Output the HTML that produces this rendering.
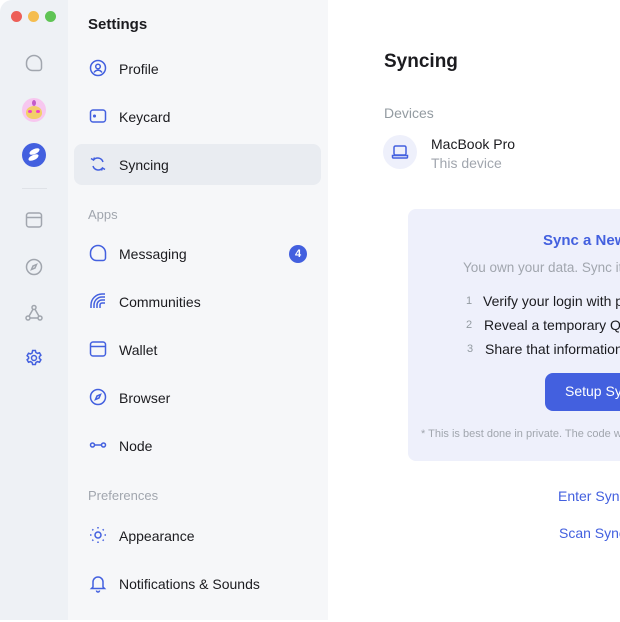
<!DOCTYPE html>
<html><head><meta charset="utf-8"><style>
*{margin:0;padding:0;box-sizing:border-box}
body{width:620px;height:620px;overflow:hidden;background:#fff;font-family:"Liberation Sans",sans-serif;position:relative;color:#1b1b1f}
.w{position:absolute;left:0;top:2px;width:620px;height:620px}
.rail{position:absolute;left:0;top:0;width:68px;height:620px;background:#eef1f5;border-top-left-radius:12px}
.col{position:absolute;left:68px;top:0;width:260px;height:620px;background:#f6f7f9}
.a{position:absolute;white-space:nowrap}
.it{font-size:14px;left:119px;line-height:16px}
.ic{position:absolute;left:88px;width:20px;height:20px}
.sec{font-size:13px;color:#a1a6ae;left:88px}
.ri{position:absolute;left:24px;width:20px;height:20px}
</style></head><body>
<div class="rail"></div>
<div class="col"></div>
<div class="w">
<div class="a" style="left:11px;top:9px;width:11px;height:11px;border-radius:50%;background:#ed5f57"></div>
<div class="a" style="left:28px;top:9px;width:11px;height:11px;border-radius:50%;background:#f5bd4f"></div>
<div class="a" style="left:45px;top:9px;width:11px;height:11px;border-radius:50%;background:#5fc454"></div>

<svg class="ri" style="top:51px" viewBox="0 0 20 20" fill="none" stroke="#a1a6ae" stroke-width="1.5"><path d="M10 2.5a7.5 7.5 0 0 0-7.5 7.5v1.5a6 6 0 0 0 6 6H15a2.5 2.5 0 0 0 2.5-2.5V10A7.5 7.5 0 0 0 10 2.5z"/></svg>
<div class="a" style="left:22px;top:96px;width:24px;height:24px;border-radius:50%;background:#f7c7ef;overflow:hidden">
 <div class="a" style="left:4px;top:8px;width:16px;height:13px;border-radius:50% 50% 45% 45%;background:#f2cf6a"></div>
 <div class="a" style="left:6px;top:12px;width:4px;height:3px;border-radius:50%;background:#ef3ec8"></div>
 <div class="a" style="left:14px;top:12px;width:4px;height:3px;border-radius:50%;background:#ef3ec8"></div>
 <div class="a" style="left:10px;top:2px;width:4px;height:6px;border-radius:50%;background:#c35cc9"></div>
</div>
<div class="a" style="left:22px;top:141px;width:24px;height:24px;border-radius:50%;background:#4360df">
 <div class="a" style="left:7px;top:6px;width:11px;height:5px;border-radius:50%;background:#fff;transform:rotate(-25deg)"></div>
 <div class="a" style="left:6px;top:12px;width:11px;height:5px;border-radius:50%;background:#fff;transform:rotate(-25deg)"></div>
</div>
<div class="a" style="left:22px;top:186px;width:25px;height:1px;background:#dfe2e7"></div>
<svg class="ri" style="top:208px" viewBox="0 0 20 20" fill="none" stroke="#a1a6ae" stroke-width="1.5"><rect x="2.5" y="3" width="15" height="14" rx="2.5"/><path d="M2.5 7.5h15"/></svg>
<svg class="ri" style="top:255px" viewBox="0 0 20 20" fill="none" stroke="#a1a6ae" stroke-width="1.5"><circle cx="10" cy="10" r="7.5"/><path d="M12.5 7.5l-1.5 3.5-3.5 1.5 1.5-3.5z"/></svg>
<svg class="ri" style="top:301px" viewBox="0 0 20 20" fill="none" stroke="#a1a6ae" stroke-width="1.5"><circle cx="10" cy="4.5" r="2"/><circle cx="4" cy="15" r="2"/><circle cx="16" cy="15" r="2"/><path d="M9 6.3L5 13.2M11 6.3l4 6.9M6 15h8"/></svg>
<svg class="ri" style="top:346px" viewBox="0 0 20 20" fill="none" stroke="#4360df" stroke-width="1.5"><circle cx="10" cy="10" r="2.5"/><path d="M8.6 2.5h2.8l.5 2 1.6.9 2-.6 1.4 2.4-1.5 1.4v1.8l1.5 1.4-1.4 2.4-2-.6-1.6.9-.5 2H8.6l-.5-2-1.6-.9-2 .6-1.4-2.4 1.5-1.4V9.1L3.1 7.7l1.4-2.4 2 .6 1.6-.9z"/></svg>

<div class="a" style="left:88px;top:14px;font-size:15px;font-weight:bold">Settings</div>

<div class="a" style="left:74px;top:142px;width:247px;height:41px;border-radius:8px;background:#e9ecf1"></div>

<svg class="ic" style="top:56px" viewBox="0 0 20 20" fill="none" stroke="#4360df" stroke-width="1.5"><circle cx="10" cy="10" r="7.5"/><circle cx="10" cy="8.5" r="2.3"/><path d="M6 14.5c1-1.6 2.3-2.3 4-2.3s3 .7 4 2.3"/></svg>
<div class="a it" style="top:59px">Profile</div>
<svg class="ic" style="top:104px" viewBox="0 0 20 20" fill="none" stroke="#4360df" stroke-width="1.5"><rect x="2.5" y="4" width="15" height="12" rx="2.5"/><circle cx="6.5" cy="10" r=".8" fill="#4360df"/></svg>
<div class="a it" style="top:107px">Keycard</div>
<svg class="ic" style="top:152px" viewBox="0 0 20 20" fill="none" stroke="#4360df" stroke-width="1.5"><path d="M15 8a5.5 5.5 0 0 0-9.5-2M5 12a5.5 5.5 0 0 0 9.5 2"/><path d="M3 4.5l2.5 1.5 1-2.5M17 15.5l-2.5-1.5-1 2.5"/></svg>
<div class="a it" style="top:155px">Syncing</div>
<div class="a sec" style="top:205px">Apps</div>
<svg class="ic" style="top:241px" viewBox="0 0 20 20" fill="none" stroke="#4360df" stroke-width="1.5"><path d="M10 2.5a7.5 7.5 0 0 0-7.5 7.5v1.5a6 6 0 0 0 6 6H15a2.5 2.5 0 0 0 2.5-2.5V10A7.5 7.5 0 0 0 10 2.5z"/></svg>
<div class="a it" style="top:244px">Messaging</div>
<div class="a" style="left:289px;top:243px;width:18px;height:18px;border-radius:50%;background:#4360df;color:#fff;font-size:11px;font-weight:bold;text-align:center;line-height:18px">4</div>
<svg class="ic" style="top:289px" viewBox="0 0 20 20" fill="none" stroke="#4360df" stroke-width="1.5"><path d="M3 17v-3a11 11 0 0 1 11-11h3M6 17v-3a8 8 0 0 1 8-8h3M9 17v-3a5 5 0 0 1 5-5h3M12 17v-3a2 2 0 0 1 2-2h3"/></svg>
<div class="a it" style="top:292px">Communities</div>
<svg class="ic" style="top:337px" viewBox="0 0 20 20" fill="none" stroke="#4360df" stroke-width="1.5"><rect x="2.5" y="3" width="15" height="14" rx="2.5"/><path d="M2.5 7.5h15"/></svg>
<div class="a it" style="top:340px">Wallet</div>
<svg class="ic" style="top:385px" viewBox="0 0 20 20" fill="none" stroke="#4360df" stroke-width="1.5"><circle cx="10" cy="10" r="7.5"/><path d="M12.5 7.5l-1.5 3.5-3.5 1.5 1.5-3.5z"/></svg>
<div class="a it" style="top:388px">Browser</div>
<svg class="ic" style="top:433px" viewBox="0 0 20 20" fill="none" stroke="#4360df" stroke-width="1.5"><circle cx="4.5" cy="10" r="2"/><circle cx="15.5" cy="10" r="2"/><path d="M6.5 10h7"/></svg>
<div class="a it" style="top:436px">Node</div>
<div class="a sec" style="top:486px">Preferences</div>
<svg class="ic" style="top:523px" viewBox="0 0 20 20" fill="none" stroke="#4360df" stroke-width="1.5"><circle cx="10" cy="10" r="3"/><path d="M10 2v1.5M10 16.5V18M2 10h1.5M16.5 10H18M4.3 4.3l1 1M14.7 14.7l1 1M4.3 15.7l1-1M14.7 5.3l1-1"/></svg>
<div class="a it" style="top:526px">Appearance</div>
<svg class="ic" style="top:571px" viewBox="0 0 20 20" fill="none" stroke="#4360df" stroke-width="1.5"><path d="M5 14V9a5 5 0 0 1 10 0v5l1.5 1.5h-13z"/><path d="M8.5 17.5a1.5 1.5 0 0 0 3 0"/></svg>
<div class="a it" style="top:574px">Notifications &amp; Sounds</div>

<div class="a" style="left:384px;top:49px;font-size:19px;font-weight:bold">Syncing</div>
<div class="a" style="left:384px;top:103px;font-size:14px;color:#939ba1">Devices</div>
<div class="a" style="left:383px;top:133px;width:34px;height:34px;border-radius:50%;background:#eef0fb"></div>
<svg class="a" style="left:390px;top:140px" width="20" height="20" viewBox="0 0 20 20" fill="none" stroke="#4360df" stroke-width="1.5"><rect x="4" y="4" width="12" height="9" rx="1.5"/><path d="M2.5 13.5h15v1.5a1 1 0 0 1-1 1h-13a1 1 0 0 1-1-1z"/></svg>
<div class="a" style="left:431px;top:134px;font-size:14px">MacBook Pro</div>
<div class="a" style="left:431px;top:153px;font-size:14px;color:#a1a6ae">This device</div>

<div class="a" style="left:408px;top:207px;width:212px;height:252px;border-radius:8px 0 0 8px;background:#eef0fb;overflow:hidden">
<div class="a" style="left:135px;top:23px;font-size:15px;font-weight:bold;color:#4360df">Sync a New Device</div>
<div class="a" style="left:55px;top:51px;font-size:13.5px;color:#a1a6ae">You own your data. Sync it among your devices.</div>
<div class="a" style="left:58px;top:86px;font-size:11px;color:#939ba1">1</div>
<div class="a" style="left:75px;top:84px;font-size:14px">Verify your login with password or KeyCard</div>
<div class="a" style="left:58px;top:110px;font-size:11px;color:#939ba1">2</div>
<div class="a" style="left:76px;top:108px;font-size:14px">Reveal a temporary QR and Sync Code</div>
<div class="a" style="left:59px;top:134px;font-size:11px;color:#939ba1">3</div>
<div class="a" style="left:77px;top:132px;font-size:14px">Share that information with your new device</div>
<div class="a" style="left:137px;top:164px;width:140px;height:38px;border-radius:8px;background:#4360df"></div>
<div class="a" style="left:157px;top:174px;font-size:14px;color:#fff">Setup Syncing</div>
<div class="a" style="left:13px;top:219px;font-size:11px;color:#a1a6ae">* This is best done in private. The code will expire after 5 minutes</div>
</div>
<div class="a" style="left:558px;top:486px;width:62px;overflow:hidden;font-size:14px;color:#4360df">Enter Sync Code</div>
<div class="a" style="left:559px;top:523px;width:61px;overflow:hidden;font-size:14px;color:#4360df">Scan Sync Code</div>
</div>
</body></html>
